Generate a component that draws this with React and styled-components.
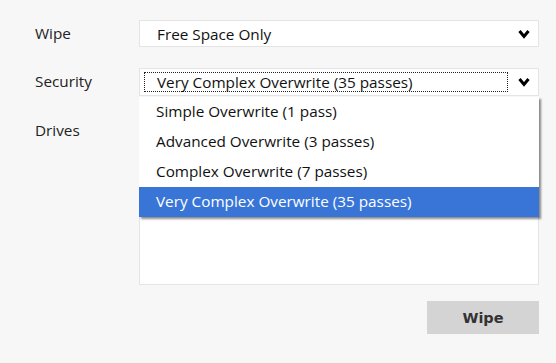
import React from "react";
import styled, { createGlobalStyle } from "styled-components";

const GlobalStyle = createGlobalStyle`
  html, body {
    margin: 0;
    padding: 0;
    background: #f7f7f7;
  }
  body {
    font-family: "Open Sans", "Noto Sans", sans-serif;
  }
`;

const Page = styled.div`
  width: 556px;
  height: 363px;
  box-sizing: border-box;
  padding: 20px 17px 0 35px;
  display: flex;
  flex-direction: column;
`;

const Form = styled.div`
  display: grid;
  grid-template-columns: 104px 400px;
  row-gap: 21px;
`;

const Label = styled.div`
  font-size: 15.3px;
  color: #222;
  height: ${(props) => props.h || 27}px;
  line-height: 26px;
`;

const Field = styled.div`
  position: relative;
`;

const SelectBox = styled.div`
  box-sizing: border-box;
  height: ${(props) => props.h || 27}px;
  background: #fff;
  border: 1px solid #e4e4e4;
  display: flex;
  align-items: center;
  padding: 0 8px 0 4px;
  font-size: 15.3px;
  color: #111;
`;

const Value = styled.div`
  flex: 1;
  margin-right: 10px;
  height: 20px;
  line-height: 18px;
  padding-left: 12px;
  box-sizing: border-box;
  border: 1px dotted ${(props) => (props.focused ? "#222" : "transparent")};
`;

const Chevron = () => (
  <svg width="12" height="10" viewBox="0 0 12 10">
    <polyline
      points="1.5,2 6,7.5 10.5,2"
      fill="none"
      stroke="#000"
      strokeWidth="3"
      strokeLinejoin="miter"
    />
  </svg>
);

const Menu = styled.div`
  position: absolute;
  top: 100%;
  left: 0;
  width: 400px;
  margin-top: 1px;
  background: #fff;
  box-shadow: 2px 2px 2px rgba(0, 0, 0, 0.45);
  z-index: 2;
`;

const Option = styled.div`
  height: 30px;
  line-height: 29px;
  padding-left: 17px;
  font-size: 15.3px;
  color: ${(props) => (props.selected ? "#fff" : "#111")};
  background: ${(props) => (props.selected ? "#3875d7" : "transparent")};
`;

const ListBox = styled.div`
  box-sizing: border-box;
  height: 168px;
  background: #fff;
  border: 1px solid #e4e4e4;
`;

const Actions = styled.div`
  display: flex;
  justify-content: flex-end;
  padding-top: 16px;
  width: 504px;
`;

const Button = styled.button`
  width: 112px;
  height: 33px;
  border: none;
  background: #d4d4d4;
  color: #333;
  font-family: "DejaVu Sans", Verdana, sans-serif;
  font-weight: bold;
  font-size: 14.5px;
  padding: 0;
`;

const options = [
  "Simple Overwrite (1 pass)",
  "Advanced Overwrite (3 passes)",
  "Complex Overwrite (7 passes)",
  "Very Complex Overwrite (35 passes)",
];

export default function App() {
  const selected = 3;
  return (
    <Page>
      <GlobalStyle />
      <Form>
        <Label>Wipe</Label>
        <Field>
          <SelectBox>
            <Value>Free Space Only</Value>
            <Chevron />
          </SelectBox>
        </Field>
        <Label h={28}>Security</Label>
        <Field>
          <SelectBox h={28}>
            <Value focused>{options[selected]}</Value>
            <Chevron />
          </SelectBox>
          <Menu>
            {options.map((o, i) => (
              <Option key={o} selected={i === selected}>
                {o}
              </Option>
            ))}
          </Menu>
        </Field>
        <Label>Drives</Label>
        <ListBox />
      </Form>
      <Actions>
        <Button>Wipe</Button>
      </Actions>
    </Page>
  );
}
